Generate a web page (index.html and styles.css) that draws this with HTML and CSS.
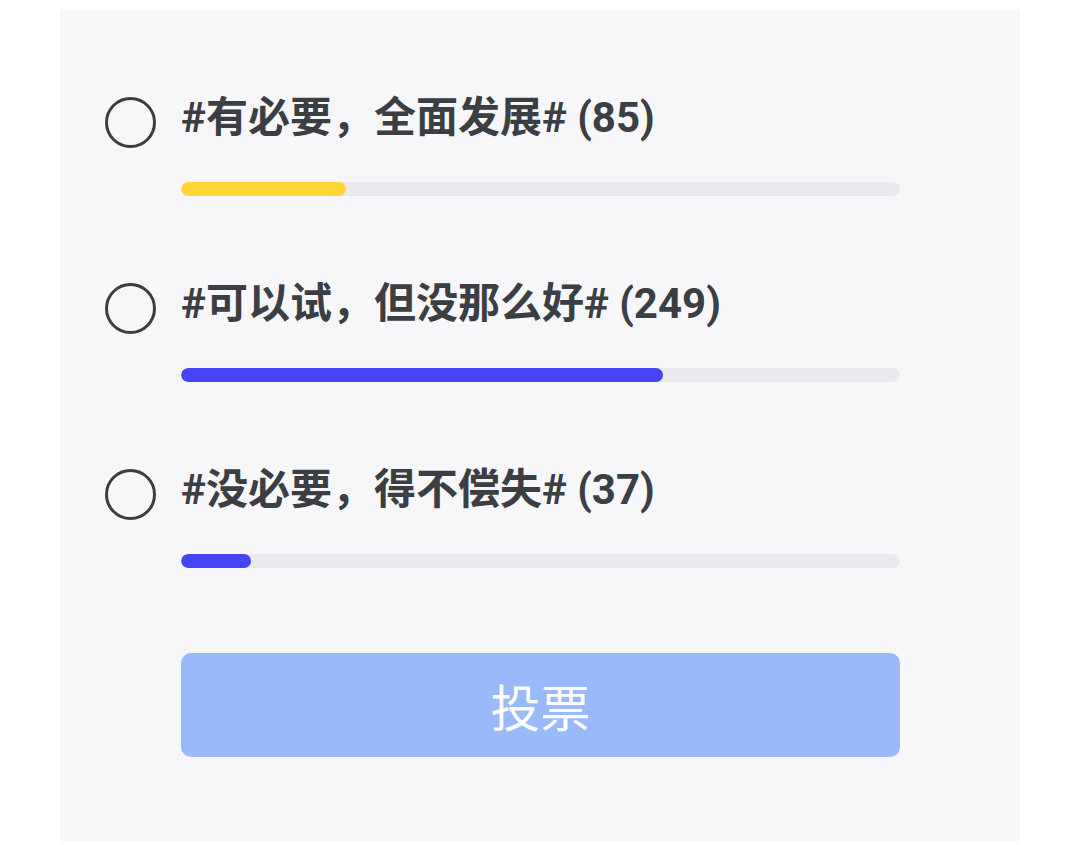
FILE: index.html
```html
<!DOCTYPE html>
<html>
<head>
    <meta charset="utf-8">
    <title>投票</title>
    <link rel="stylesheet" href="styles.css">
</head>
<body>
    <div class="poll-card">
        <div class="options">
            <label class="option">
                <span class="radio"></span>
                <div class="option-body">
                    <div class="option-title">#有必要，全面发展# (85)</div>
                    <div class="track"><div class="fill fill-yellow" style="width: 22.9%"></div></div>
                </div>
            </label>

            <label class="option">
                <span class="radio"></span>
                <div class="option-body">
                    <div class="option-title">#可以试，但没那么好# (249)</div>
                    <div class="track"><div class="fill fill-blue" style="width: 67.1%"></div></div>
                </div>
            </label>

            <label class="option">
                <span class="radio"></span>
                <div class="option-body">
                    <div class="option-title">#没必要，得不偿失# (37)</div>
                    <div class="track"><div class="fill fill-blue" style="width: 9.8%"></div></div>
                </div>
            </label>
        </div>

        <button class="vote-btn">投票</button>
    </div>
</body>
</html>
```

FILE: styles.css
```css
body {
    margin: 0;
    padding: 10px 60px 4px;
    background-color: #fff;
    font-family: Roboto, "Noto Sans CJK SC", sans-serif;
}

.poll-card {
    background-color: #f7f7f9;
    padding: 83px 120px 84px 45px;
}

.options {
    display: flex;
    flex-direction: column;
    gap: 83px;
}

.option {
    display: flex;
    align-items: flex-start;
    gap: 25px;
    cursor: pointer;
}

.radio {
    flex: 0 0 auto;
    width: 51px;
    height: 51px;
    margin-top: 4px;
    border: 3px solid #3b3d41;
    border-radius: 50%;
    box-sizing: border-box;
}

.option-body {
    flex: 1;
}

.option-title {
    font-size: 42px;
    line-height: 50px;
    font-weight: bold;
    color: #3b3e43;
    white-space: nowrap;
}

.track {
    margin-top: 39px;
    height: 14px;
    border-radius: 7px;
    background-color: #e9e9ee;
    overflow: hidden;
}

.fill {
    height: 100%;
    border-radius: 7px;
}

.fill-yellow {
    background-color: #fdd535;
}

.fill-blue {
    background-color: #4545f5;
}

.vote-btn {
    display: block;
    width: 719px;
    height: 104px;
    margin: 85px 0 0 76px;
    border: none;
    border-radius: 10px;
    background-color: #9ab9fa;
    color: #fff;
    font-family: Roboto, "Noto Sans CJK SC", sans-serif;
    font-size: 50px;
    cursor: pointer;
}
```
